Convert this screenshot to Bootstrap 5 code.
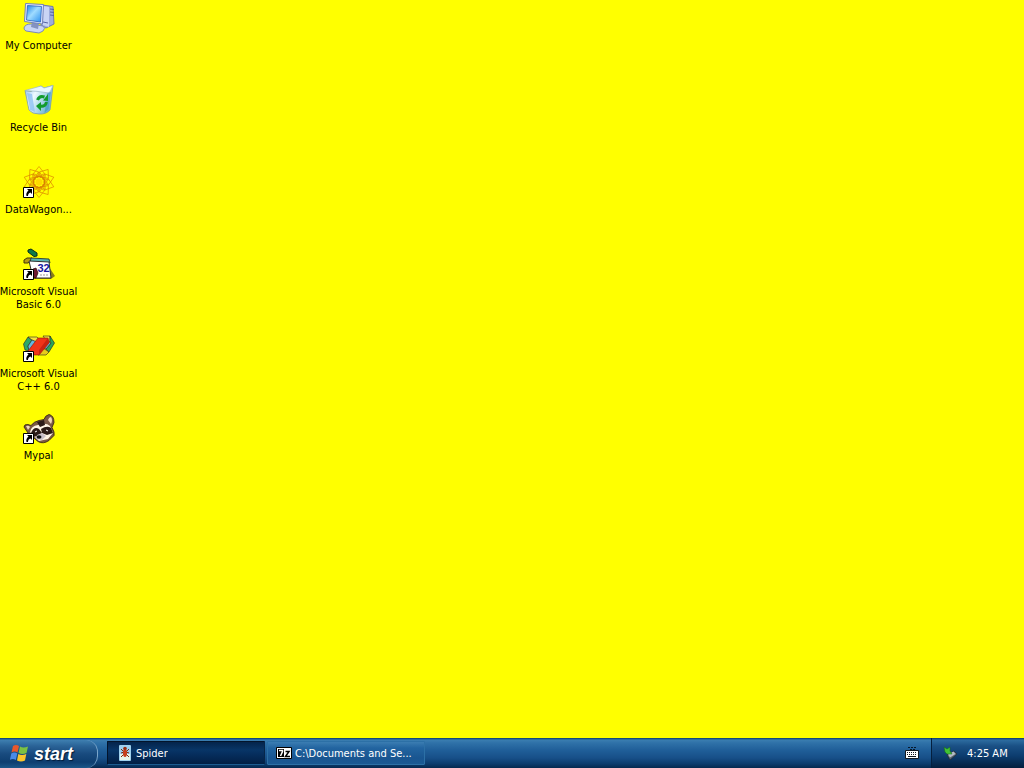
<!DOCTYPE html>
<html lang="en">
<head>
<meta charset="utf-8">
<meta name="viewport" content="width=device-width, initial-scale=1">
<title>Desktop</title>
<link href="https://cdn.jsdelivr.net/npm/bootstrap@5.3.0/dist/css/bootstrap.min.css" rel="stylesheet">
<style>
  body { background: #ff0; font-family: "DejaVu Sans Condensed", "Noto Sans", sans-serif; font-size: 11px; line-height: 13px; color: #000; }
  .desk { padding-top: 2px; }
  .shortcut { width: 77px; height: 82px; color: #000; gap: 5px; }
  .shortcut svg { width: 32px; height: 32px; flex: none; }
  .shortcut:focus-visible { outline: 1px dotted #000; }
  .taskbar { height: 30px; color: #fff; background: linear-gradient(#0b3a68 0, #3a7db0 2px, #2f71a8 5px, #205f99 12px, #174f88 20px, #0c3b6c 26px, #05294f 30px); }
  .start-btn { width: 98px; height: 28px; padding: 0 0 0 10px; gap: 5px; color: #fff; border: 0; border-right: 1px solid #7ba6cb; border-radius: 0 12px 12px 0; background: linear-gradient(#3e7fb0 0, #2a6397 6px, #184a7e 14px, #0e3e70 22px, #1c5789 28px); font-family: "Liberation Sans", Arial, sans-serif; font-size: 18px; font-weight: 700; font-style: italic; line-height: 20px; text-shadow: 1px 1px 1px #021b38; }
  .windows { gap: 2px; margin-left: 9px; }
  .task { width: 158px; height: 24px; padding: 0 8px; gap: 3px; color: #fff; border: 1px solid #2c70a6; border-radius: 1px; background: linear-gradient(#3b7db2, #2264a0 6px, #195590 16px, #1b5a93); text-align: left; }
  .task.on { padding-left: 9px; border-color: #03142b #06264a #1d5c90 #03142b; background: linear-gradient(#04244b, #083567 8px, #052b59 14px, #021f45); }
  .tray { width: 93px; height: 30px; padding-left: 10px; gap: 9px; border-left: 1px solid #041f3e; background: linear-gradient(#0b3a68 0, #2d6ca0 2px, #1a5085 8px, #0c3c6e 18px, #041f3e 30px); }
</style>
</head>
<body class="d-flex flex-column min-vh-100">
<svg width="0" height="0" class="position-absolute" aria-hidden="true">
  <symbol id="arrow" viewBox="0 0 11 11">
    <path fill="#fff" stroke="#000" d="M.5.5h10v10H.5z"/>
    <path d="M4 2h5v5L7.500 5.500Q5 6 5 9H3.500Q2.500 6 5.500 3.500z"/>
  </symbol>
</svg>
<main class="desk flex-grow-1 d-flex flex-column align-items-start">
  <button class="shortcut d-flex flex-column align-items-center border-0 bg-transparent p-0 text-center">
    <svg viewBox="0 0 32 32" aria-hidden="true">
      <defs><linearGradient id="scr" x2="1" y2="1"><stop stop-color="#1c82e8"/><stop offset=".45" stop-color="#a0dcff"/><stop offset="1" stop-color="#2a90ee"/></linearGradient></defs>
      <path fill="#9eacdc" stroke="#6d78b0" d="M19 3 30 4.500 31 22 23 26 18 23z"/>
      <path fill="#c9d4f4" d="m20 4 6 1v20l-6-2z"/>
      <path stroke="#5864a4" fill="none" d="m27 7 4 .5M27 10l4 .5M27 13l4 .5M20 20l5 1"/>
      <path fill="#c9d6f4" stroke="#7a88ba" d="M1 26Q2 22 8 22l12 2q3 2 0 5l-4 2-13-2q-2-1-2-3z"/>
      <path fill="#8492c0" d="m9 20 7 1-1 6-7-2z"/>
      <path fill="#e0e9fe" stroke="#7482b8" d="m2.500 1.500 18 1-1 19.500L1.500 19.500z"/>
      <path fill="url(#scr)" stroke="#2c60bc" stroke-width=".8" d="M4.500 3.500 18.500 4.500 17.500 20 3.500 18z"/>
    </svg>
    <span class="text-nowrap">My Computer</span>
  </button>
  <button class="shortcut d-flex flex-column align-items-center border-0 bg-transparent p-0 text-center">
    <svg viewBox="0 0 32 32" aria-hidden="true">
      <defs><linearGradient id="bin" x2="1" y2=".5"><stop stop-color="#8cbcf0"/><stop offset=".4" stop-color="#eefaff"/><stop offset="1" stop-color="#6ab4d4"/></linearGradient></defs>
      <path fill="url(#bin)" stroke="#7a9cae" stroke-width=".8" d="M2 6.500 8 7.500 18 2 21 4 30 1.500 27 26q-4 4.500-11 4Q9 30 6 26z"/>
      <path fill="#e9f8fe" stroke="#9ab8c8" stroke-width=".7" d="M2 6.500 18 2 21 4 30 1.500Q28 7 26 9 14 7 2 6.500z"/>
      <path fill="#8fc0f4" d="m4 9 5 1 3 18-5-2z" opacity=".8"/>
      <path fill="#3a95c0" d="M28 8 25.500 25l-4 4 3-20z" opacity=".6"/>
      <g fill="none" stroke="#129b2c" stroke-width="3"><path d="M14.500 16q2-5 7-3M23.500 18q-1 5-6 4"/></g>
      <path fill="#129b2c" d="M20 16.500 25 10v7zM18 18v9l-5-5z"/>
    </svg>
    <span class="text-nowrap">Recycle Bin</span>
  </button>
  <button class="shortcut d-flex flex-column align-items-center border-0 bg-transparent p-0 text-center">
    <svg viewBox="0 0 32 32" aria-hidden="true">
      <defs><path id="spike" d="M16 .5 10.500 7.500 12 14M16 .5 21.500 7.500 20 14M10.500 7.500 20 12M21.500 7.500 12 12"/></defs>
      <g fill="none" stroke="#d87800" stroke-width=".6">
        <use href="#spike"/><use href="#spike" transform="rotate(36 16 16)"/><use href="#spike" transform="rotate(72 16 16)"/><use href="#spike" transform="rotate(108 16 16)"/><use href="#spike" transform="rotate(144 16 16)"/><use href="#spike" transform="rotate(180 16 16)"/><use href="#spike" transform="rotate(216 16 16)"/><use href="#spike" transform="rotate(252 16 16)"/><use href="#spike" transform="rotate(288 16 16)"/><use href="#spike" transform="rotate(324 16 16)"/>
      </g>
      <circle cx="16" cy="16" r="3.500" fill="#ffd800"/>
      <use href="#arrow" y="21" width="11" height="11"/>
    </svg>
    <span class="text-nowrap">DataWagon...</span>
  </button>
  <button class="shortcut d-flex flex-column align-items-center border-0 bg-transparent p-0 text-center">
    <svg viewBox="0 0 32 32" aria-hidden="true">
      <path fill="#8a7f18" d="m26 19 6 9-4 3H12v-3z"/>
      <path fill="#0d7a48" stroke="#0a2b1c" d="m5 2 3-1 6 4v3l-3 .5L5 4z"/>
      <path fill="#b59a14" stroke="#40350a" d="m1 12 3-2h5v2l-4 3H1z"/>
      <path fill="#5ab4b0" stroke="#123" stroke-width=".8" d="m8 10 18 1 1 4H7z"/>
      <path fill="#fff" stroke="#333" d="m6 13 20 1 2 16H10z"/>
      <path fill="#701830" stroke="#2a0810" stroke-width=".7" d="m10 21 3-1 2 5-2 5h-3z"/>
      <text x="14.500" y="24" font-family="Liberation Sans, sans-serif" font-size="11" font-weight="700" fill="#1414a0">32</text>
      <path stroke="#999" stroke-dasharray="2 1" d="M17 27h9"/>
      <use href="#arrow" y="21" width="11" height="11"/>
    </svg>
    <span class="text-nowrap">Microsoft Visual<br>Basic 6.0</span>
  </button>
  <button class="shortcut d-flex flex-column align-items-center border-0 bg-transparent p-0 text-center">
    <svg viewBox="0 0 32 32" aria-hidden="true">
      <g stroke="#222" stroke-width=".6" stroke-linejoin="round">
        <path fill="#2ca868" d="M.5 14 5 7l4 3-4 6 1 5-4-1z"/>
        <path fill="#f5e43c" d="M5 7h9l3 3-3 3-5-3z"/>
        <path fill="#64b8e0" d="m9 10 5 2-8 9-1-5z"/>
        <path fill="#f5e43c" d="M20 6h7v5l-2 2z"/>
        <path fill="#2aa65a" d="m27 6 4.500 7-5.500 9-3-3 5-6-1-2z"/>
        <path fill="#64b8e0" d="m26 12 2 1-5 6-3-1z"/>
        <path fill="#e6cc1c" d="m20 18 6 4-3 3h-8z"/>
        <path fill="#f03418" stroke="#8a1408" d="M5 21 15 8h10l1 5L16 25H8z"/>
        <path fill="#c82410" stroke="none" d="m16 20 9-12 1 5-10 12z"/>
      </g>
      <use href="#arrow" y="21" width="11" height="11"/>
    </svg>
    <span class="text-nowrap">Microsoft Visual<br>C++ 6.0</span>
  </button>
  <button class="shortcut d-flex flex-column align-items-center border-0 bg-transparent p-0 text-center">
    <svg viewBox="0 0 32 32" aria-hidden="true">
      <path fill="#7b5a46" stroke="#2c1a12" stroke-width=".8" d="M1 15Q1 12 5 12.500l3 1q3-4 8-5l5-1q1-4 5-5 5 1 5 8l-2 5q3 5 2 8l-5 5q-6 4-11 1L5 21z"/>
      <path fill="#f0d8bc" d="M3 14q3-1 4 1l-2 3zM25 8q1-3 3-3 2 3 0 7z"/>
      <path fill="#fff4e4" d="M7 20q1-6 8-7 8-3 12 1l3 7-5 6-9 2z"/>
      <path fill="#2b1a16" d="M8 21q3-7 8-4l3 4-4 3-6 1zM18 17q6-4 10-1l2 5-6 2-5-2zM14 10l3 5 5-2-1-5z"/>
      <path stroke="#fff" d="m12 20 2-1M23 18l2 1"/>
      <path fill="#c9bfc8" d="m14 23 5-2 4 3-4 4-6-1z"/>
      <ellipse cx="16" cy="25" rx="2.500" ry="1.800" fill="#111"/>
      <use href="#arrow" y="21" width="11" height="11"/>
    </svg>
    <span class="text-nowrap">Mypal</span>
  </button>
</main>
<footer class="taskbar d-flex align-items-center">
  <button class="start-btn d-flex align-items-center align-self-end">
    <svg width="19" height="19" viewBox="0 0 19 19" aria-hidden="true">
      <path fill="#e8582c" d="M3 1q3-2 6 0L7.500 7.500q-3-2-6 0z"/><path fill="#7cc142" d="M10 1.500q3 2 8 0L16.500 8q-4 2-8 0z"/><path fill="#4a8be8" d="M1.300 8.500q3-2 6 0L5.800 15q-3-2-6 0z"/><path fill="#fbc62c" d="M8.300 9q3.500 2 8 0L15 15.500q-4 2-8 0z"/>
    </svg>
    <span>start</span>
  </button>
  <nav class="windows d-flex flex-grow-1" aria-label="Open windows">
    <button class="task on d-flex align-items-center">
      <svg width="16" height="16" viewBox="0 0 16 16" aria-hidden="true"><rect x="2" width="12" height="16" rx="1" fill="#9fd0ee"/><path fill="#e8f4ea" d="M3 9h10v6H3z"/><path fill="none" stroke="#7a2a10" d="m4 4 3 3-3 1M12 4 9 7l3 1M4 12l3-3M12 12 9 9"/><ellipse cx="8" cy="8" rx="2" ry="4" fill="#c8401c"/><circle cx="8" cy="3.500" r="1.800" fill="#9a2c12"/></svg>
      <span class="text-truncate">Spider</span>
    </button>
    <button class="task d-flex align-items-center">
      <svg width="16" height="16" viewBox="0 0 16 16" aria-hidden="true"><path fill="#fff" stroke="#000" d="M.5 2.500h15v11H.5z"/><path fill="#000" d="M2 4h6v8H2z"/><path fill="none" stroke="#fff" stroke-width="1.500" d="M3 5.500h3.500v1L4.500 11"/><path fill="none" stroke="#000" stroke-width="1.500" d="M9.500 6.500H13L9.500 11.500h4.500"/></svg>
      <span class="text-nowrap">C:\Documents and Se...</span>
    </button>
  </nav>
  <svg class="me-2" width="20" height="16" viewBox="0 0 20 16" aria-hidden="true"><path fill="none" stroke="#06182c" stroke-dasharray="2 1" d="M5 2.500h8M7 4.500h6"/><path fill="#fff" stroke="#101820" d="M2.500 5.500h13v8h-13z"/><path stroke="#101820" stroke-dasharray="1 1" d="M4 7.500h10M4 9.500h10"/><path stroke="#101820" d="M5 11.500h8"/></svg>
  <div class="tray d-flex align-items-center">
    <svg width="16" height="16" viewBox="0 0 16 16" aria-hidden="true"><path fill="#59636e" stroke="#1b242e" stroke-width=".6" d="m5 10 7-4 3 3-7 6z"/><path fill="#b4bcc6" d="m6 9.500 5.500-3 2 2.500L8 12.500z"/><path fill="#42c234" stroke="#146818" stroke-width=".5" d="m2 2 3 2 3-2v4l2 3-5 0-2-2z"/></svg>
    <time>4:25 AM</time>
  </div>
</footer>
<script src="https://cdn.jsdelivr.net/npm/bootstrap@5.3.0/dist/js/bootstrap.bundle.min.js"></script>
</body>
</html>
